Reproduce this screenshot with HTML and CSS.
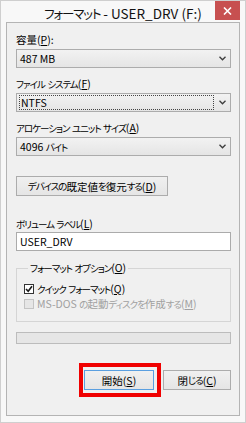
FILE: index.html
```html
<!DOCTYPE html>
<html lang="ja">
<head>
<meta charset="utf-8">
<title>フォーマット</title>
<link rel="stylesheet" href="styles.css">
</head>
<body>
<div class="window">
  <div class="titlebar">
    <div class="title"><span class="k">フォーマット</span> - USER_DRV (F:)</div>
    <div class="close"><svg width="9" height="8" viewBox="0 0 9 8"><path d="M1 0.5 L8 7.5 M8 0.5 L1 7.5" stroke="#fff" stroke-width="1.6"/></svg></div>
  </div>
  <div class="client">
    <div class="lbl">容量(<u>P</u>):</div>
    <div class="combo"><span class="val">487 MB</span><svg class="chev" width="7" height="5" viewBox="0 0 7 5"><path d="M0.5 0.8 L3.5 3.8 L6.5 0.8" fill="none" stroke="#3c3c3c" stroke-width="1.3"/></svg></div>

    <div class="lbl gap"><span class="k">ファイル</span> <span class="k">システム</span>(<u>F</u>)</div>
    <div class="combo focus"><span class="val focusbox">NTFS</span><svg class="chev" width="7" height="5" viewBox="0 0 7 5"><path d="M0.5 0.8 L3.5 3.8 L6.5 0.8" fill="none" stroke="#3c3c3c" stroke-width="1.3"/></svg></div>

    <div class="lbl gap"><span class="k">アロケーション</span> <span class="k">ユニット</span> <span class="k">サイズ</span>(<u>A</u>)</div>
    <div class="combo"><span class="val">4096 <span class="k">バイト</span></span><svg class="chev" width="7" height="5" viewBox="0 0 7 5"><path d="M0.5 0.8 L3.5 3.8 L6.5 0.8" fill="none" stroke="#3c3c3c" stroke-width="1.3"/></svg></div>

    <div class="btn restore"><span class="k">デバイスの</span>既定値<span class="k">を</span>復元<span class="k">する</span>(<u>D</u>)</div>

    <div class="lbl vol"><span class="k">ボリューム</span> <span class="k">ラベル</span>(<u>L</u>)</div>
    <div class="input">USER_DRV</div>

    <fieldset class="group">
      <legend><span class="k">フォーマット</span> <span class="k">オプション</span>(<u>O</u>)</legend>
      <div class="check">
        <span class="box"><svg width="8" height="8" viewBox="0 0 8 8"><path d="M1 4 L3.2 6.3 L7 1.2" fill="none" stroke="#1a1a1a" stroke-width="1.6"/></svg></span>
        <span><span class="k">クイック</span> <span class="k">フォーマット</span>(<u>Q</u>)</span>
      </div>
      <div class="check disabled">
        <span class="box"></span>
        <span>MS-DOS <span class="k">の</span>起動<span class="k">ディスクを</span>作成<span class="k">する</span>(<u>M</u>)</span>
      </div>
    </fieldset>

    <div class="progress"></div>

    <div class="actions">
      <div class="btn start">開始(<u>S</u>)</div>
      <div class="btn">閉<span class="k">じる</span>(<u>C</u>)</div>
    </div>
  </div>
</div>
</body>
</html>
```

FILE: styles.css
```css
* { box-sizing: border-box; }
html, body { margin: 0; background: #ffffff; }
body {
  font-family: "Noto Sans CJK JP", sans-serif;
  font-size: 10.5px;
  font-feature-settings: "palt";
  color: #000;
}
u { text-decoration: underline; text-underline-offset: 1px; }
.k { font-size: 9.5px; letter-spacing: -1px; }

.window {
  width: 246px;
  height: 423px;
  background: #f8f8f8;
  border: 1px solid #cfcfcf;
  padding: 0 5px 6px 5px;
  display: flex;
  flex-direction: column;
}

.titlebar {
  height: 21px;
  display: flex;
  align-items: flex-start;
}
.title {
  flex: 1;
  padding-left: 25px;
  text-align: center;
  font-size: 13.5px;
  line-height: 18px;
  padding-top: 3px;
  white-space: nowrap;
  color: #111;
}
.title .k { font-size: 12.5px; letter-spacing: -1.2px; }
.close {
  width: 25px;
  height: 19px;
  background: #c75050;
  display: flex;
  align-items: center;
  justify-content: center;
}

.client {
  flex: 1;
  background: #f0f0f0;
  border: 1px solid #b4b4b4;
  padding: 9px 8px 0 9px;
  display: flex;
  flex-direction: column;
}

.lbl {
  height: 15px;
  line-height: 15px;
  margin-bottom: 2px;
  white-space: nowrap;
}
.lbl.gap { margin-top: 8px; }
.lbl.vol { margin-top: 20px; margin-bottom: 1px; }

.combo {
  height: 19px;
  border: 1px solid #acacac;
  background: linear-gradient(#f2f2f2, #e5e5e5);
  display: flex;
  align-items: center;
  padding: 0 4px 0 2px;
}
.combo .val {
  flex: 1;
  line-height: 15px;
  padding-left: 1px;
  white-space: nowrap;
}
.combo .focusbox {
  border: 1px dotted #444;
  height: 15px;
  line-height: 13px;
}
.combo .chev { margin-left: 5px; }

.btn {
  height: 20px;
  border: 1px solid #acacac;
  background: linear-gradient(#f0f0f0, #e5e5e5);
  display: flex;
  align-items: center;
  justify-content: center;
  line-height: 15px;
  white-space: nowrap;
}
.btn.restore {
  margin-top: 20px;
  width: 152px;
}

.input {
  height: 19px;
  border: 1px solid #ababab;
  background: #fff;
  line-height: 17px;
  padding-left: 3px;
}

.group {
  margin: 9px 0 0 0;
  padding: 5px 0 10px 7px;
  border: 1px solid #d5d5d5;
  min-inline-size: 0;
}
.group legend {
  padding: 0 2px;
  margin-left: 4px;
  line-height: 15px;
  white-space: nowrap;
}
.check {
  display: flex;
  align-items: center;
  height: 15px;
  line-height: 15px;
  gap: 3px;
  white-space: nowrap;
}
.check .box {
  width: 10px;
  height: 10px;
  border: 1px solid #333;
  background: #fff;
  display: flex;
  align-items: center;
  justify-content: center;
}
.check.disabled { color: #a0a0a0; }
.check.disabled .box {
  border-color: #c4c4c4;
  background: #e6e6e6;
}

.progress {
  margin-top: 10px;
  height: 12px;
  border: 1px solid #bcbcbc;
  background: #e6e6e6;
}

.actions {
  margin-top: 26px;
  display: flex;
  justify-content: flex-end;
  gap: 9px;
}
.actions .btn { width: 68px; }
.btn.start {
  width: 70px;
  border-color: #5a9fe0;
  position: relative;
}
.btn.start::after {
  content: "";
  position: absolute;
  top: -8px;
  bottom: -8px;
  left: -6px;
  right: -8px;
  border: 4px solid #f00000;
}
```
